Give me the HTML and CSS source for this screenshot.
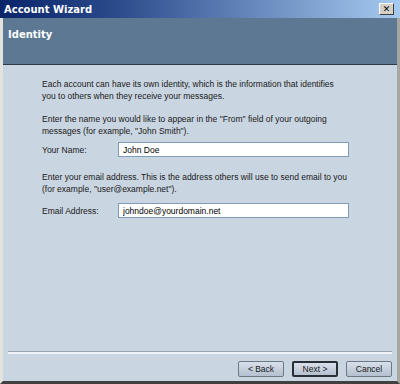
FILE: index.html
```html
<!DOCTYPE html>
<html lang="en">
<head>
    <meta charset="UTF-8">
    <title>Account Wizard</title>
    <link rel="stylesheet" href="styles.css">
</head>
<body>
    <div class="window">
        <div class="titlebar">
            <span class="title">Account Wizard</span>
            <span class="close">&#x2715;</span>
        </div>
        <div class="dialog">
            <div class="header">Identity</div>
            <div class="content">
                <p class="intro">Each account can have its own identity, which is the information that identifies<br>you to others when they receive your messages.</p>
                <p>Enter the name you would like to appear in the "From" field of your outgoing<br>messages (for example, "John Smith").</p>
                <div class="field">
                    <label>Your Name:</label>
                    <input type="text" value="John Doe">
                </div>
                <p class="email-note">Enter your email address. This is the address others will use to send email to you<br>(for example, "user@example.net").</p>
                <div class="field">
                    <label>Email Address:</label>
                    <input type="text" value="johndoe@yourdomain.net">
                </div>
            </div>
            <div class="footer">
                <button>&lt; Back</button>
                <button class="default">Next &gt;</button>
                <button>Cancel</button>
            </div>
        </div>
    </div>
</body>
</html>
```
FILE: styles.css
```css
body {
    margin: 0;
    font-family: "Liberation Sans", Arial, sans-serif;
    font-size: 8.5px;
    color: #1a1a1a;
}
.window {
    width: 400px;
    height: 384px;
    box-sizing: border-box;
    background-color: #d4d0c8;
    border-left: 3px solid #e4e2dc;
    border-right: 3px solid #a8a6a0;
    border-bottom: 3px solid #404040;
    display: flex;
    flex-direction: column;
}
.titlebar {
    height: 18px;
    margin-left: -3px;
    margin-right: -3px;
    display: flex;
    align-items: center;
    justify-content: space-between;
    padding: 0 6px 0 4px;
    background: linear-gradient(to right, #0a246a, #2c4c8c 30%, #a6caf0);
    color: white;
    font-family: "DejaVu Sans", sans-serif;
    font-weight: bold;
    font-size: 10px;
}
.close {
    width: 15px;
    height: 12px;
    box-sizing: border-box;
    background-color: #d4d0c8;
    color: black;
    font-size: 9px;
    line-height: 10px;
    text-align: center;
    border: 1px solid;
    border-color: #fff #404040 #404040 #fff;
}
.dialog {
    flex: 1;
    display: flex;
    flex-direction: column;
    background-color: #c9d5e1;
}
.header {
    height: 47px;
    box-sizing: border-box;
    padding: 11px 5px;
    background-color: #5c7893;
    border-bottom: 1px solid #2a3a4a;
    color: white;
    font-family: "DejaVu Sans", sans-serif;
    font-weight: bold;
    font-size: 10px;
}
.content {
    flex: 1;
    padding: 13px 10px 0 39px;
}
.content p {
    margin: 0 0 14px 0;
    line-height: 12px;
    white-space: nowrap;
}
.content p.intro {
    margin-bottom: 11px;
}
.content p.email-note {
    margin-bottom: 17px;
}
.field {
    display: flex;
    align-items: center;
    margin: -9px 0 14px 0;
}
.field label {
    width: 76px;
}
.field input {
    width: 231px;
    height: 15px;
    box-sizing: border-box;
    border: 1px solid #7f9db9;
    background: white;
    font-family: "Liberation Sans", Arial, sans-serif;
    font-size: 8.5px;
    padding: 0 4px;
}
.footer {
    display: flex;
    justify-content: flex-end;
    gap: 8px;
    margin: 0 5px;
    padding: 7px 0 4px;
    border-top: 2px solid #eef2f6;
    box-shadow: 0 -1px 0 #9aa8b6;
}
.footer button {
    width: 46px;
    height: 16px;
    padding: 0;
    font-family: "Liberation Sans", Arial, sans-serif;
    font-size: 8.5px;
    color: #1a1a1a;
    background: linear-gradient(#d8e0ea, #b4c0cf);
    border: 1px solid #6c7884;
    border-radius: 2px;
}
.footer button.default {
    border: 2px solid #2a2f36;
}
```
